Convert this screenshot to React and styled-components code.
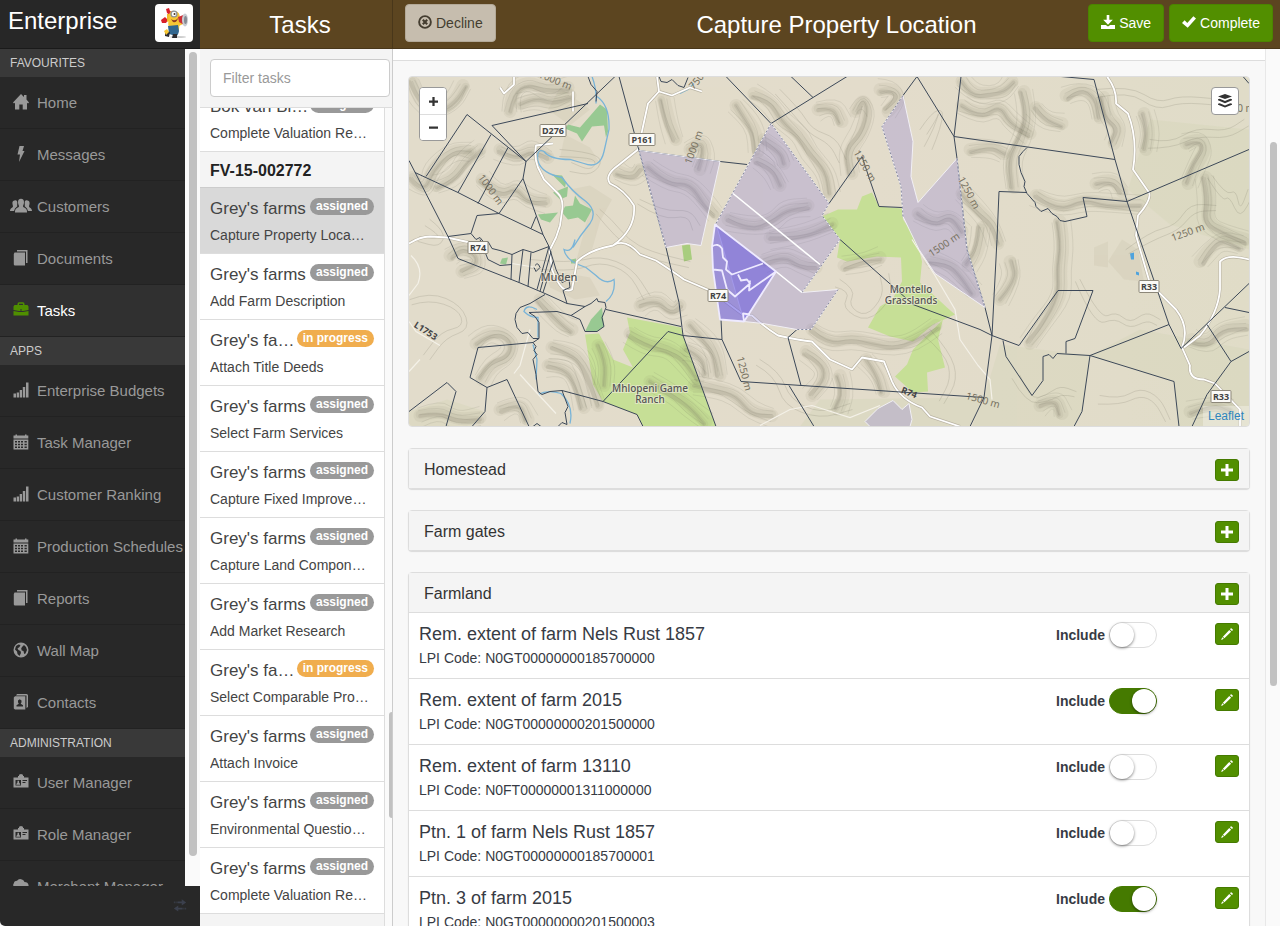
import React from "react";
import styled, { createGlobalStyle, css } from "styled-components";

const GlobalStyle = createGlobalStyle`
  *, *::before, *::after { box-sizing: border-box; }
  body {
    margin: 0;
    background: #f8f8f8;
    color: #333;
    font: 14px/20px "Helvetica Neue", "Liberation Sans", Arial, sans-serif;
  }
  h1, h2, h3, p, ul { margin: 0; padding: 0; font-weight: normal; }
  ul { list-style: none; }
  button, input { font: inherit; }
`;

/* ---------- shell ---------- */

const Shell = styled.div`
  display: grid;
  grid-template-columns: 200px 193px minmax(0, 1fr);
  height: 100vh;
  overflow: hidden;
`;

const Column = styled.div`
  display: flex;
  flex-direction: column;
  min-width: 0;
  min-height: 0;
`;

const Bar = styled.header`
  flex: 0 0 49px;
  display: flex;
  align-items: center;
  background: #5c4520;
  border-bottom: 1px solid #49371a;
  color: #fff;
`;

const BrandBar = styled(Bar)`
  justify-content: space-between;
  padding: 0 7px 2px 8px;
  background: #272727;
  border-color: #1a1a1a;
`;

const Title = styled.h1`
  padding-top: 2px;
  font-size: 24px;
  line-height: 32px;
`;

const Brand = styled(Title)`
  padding: 0 0 4px;
`;

const Avatar = styled.svg`
  width: 38px;
  height: 38px;
  border-radius: 4px;
  background: #fff;
`;

const Scroller = styled.div`
  flex: 1;
  display: flex;
  min-height: 0;
  overflow: hidden;
`;

const Track = styled.div`
  flex: 0 0 15px;
  padding: 0 3px 0 4px;
  background: #fafafa;
  border-left: ${(p) => (p.$line ? "1px solid #e8e8e8" : "0")};
`;

const Thumb = styled.div`
  height: ${(p) => p.$size};
  margin-top: ${(p) => p.$top}px;
  border-radius: 4px;
  background: #c1c1c1;
`;

/* ---------- sidebar ---------- */

const SideNav = styled.nav`
  flex: 1;
  min-width: 0;
  overflow: hidden;
  background: #282828;
`;

const SideHeading = styled.h2`
  height: 28px;
  padding-left: 10px;
  background: #393939;
  color: #ccc;
  font-size: 12px;
  line-height: 28px;
`;

const SideLink = styled.a`
  display: flex;
  align-items: center;
  gap: 8px;
  height: 52px;
  padding-left: 13px;
  border-bottom: 1px solid #222;
  background: ${(p) => (p.$active ? "#303030" : "transparent")};
  color: ${(p) => (p.$active ? "#fff" : "#999")};
  font-size: 15px;
  text-decoration: none;
  white-space: nowrap;

  svg {
    flex: none;
    margin-bottom: 2px;
    overflow: visible;
    color: ${(p) => (p.$active ? "#4f8f00" : "#999")};
  }
`;

const SideFoot = styled.footer`
  flex: 0 0 40px;
  display: flex;
  align-items: center;
  justify-content: flex-end;
  padding: 0 13px 2px 0;
  background: #282828;
  border-bottom-left-radius: 5px;
  color: #3b404d;

  svg { width: 14px; height: 14px; }
`;

/* ---------- task list ---------- */

const TaskBar = styled(Bar)`
  justify-content: center;
  padding-left: 8px;
  border-right: 1px solid #49371a;
`;

const FilterBox = styled.div`
  flex: 0 0 59px;
  padding: 10px 2px 10px 10px;
  background: #f4f4f4;
  border-bottom: 1px solid #ddd;
  border-right: 1px solid #ccc;
`;

const FilterInput = styled.input`
  width: 100%;
  height: 38px;
  padding: 0 12px;
  border: 1px solid #ccc;
  border-radius: 4px;
  background: #fff;
  &::placeholder { color: #999; }
`;

const TaskScroller = styled(Scroller)`
  background: #f4f4f4;
  border-right: 1px solid #ccc;
`;

const TaskList = styled.ul`
  flex: 1;
  min-width: 0;
  margin-top: -22px;
`;

const TaskTrack = styled(Track)`
  flex-basis: 8px;
  padding: 0 0 0 4px;
  border-left: 1px solid #ddd;
`;

const TaskThumb = styled(Thumb)`
  border-radius: 4px 0 0 4px;
`;

const GroupRow = styled.li`
  height: 36px;
  padding-left: 10px;
  border-bottom: 1px solid #ccc;
  color: #222;
  font-size: 16px;
  font-weight: bold;
  line-height: 38px;
`;

const TaskRow = styled.li`
  height: 66px;
  padding: 9px 10px;
  border-bottom: 1px solid #ddd;
  background: ${(p) => (p.$active ? "#d9d9d9" : "#fff")};
  color: #444;
`;

const TaskTop = styled.div`
  display: flex;
  justify-content: space-between;
  margin-bottom: 4px;
`;

const clipped = css`
  overflow: hidden;
  text-overflow: ellipsis;
  white-space: nowrap;
`;

const TaskName = styled.h3`
  min-width: 0;
  font-size: 17px;
  line-height: 24px;
  ${clipped}
`;

const TaskStep = styled.p`
  padding-right: 3px;
  ${clipped}
`;

const Badge = styled.span`
  flex: none;
  height: 17px;
  margin-top: 1px;
  padding: 0 6px;
  border-radius: 9px;
  background: ${(p) => (p.$busy ? "#f0ad4e" : "#999")};
  color: #fff;
  font-size: 12px;
  font-weight: bold;
  line-height: 16px;
`;

/* ---------- detail ---------- */

const DetailBar = styled(Bar)`
  display: grid;
  grid-template-columns: 1fr auto 1fr;
  padding: 0 7px;
`;

const Actions = styled.div`
  display: flex;
  justify-content: ${(p) => (p.$end ? "flex-end" : "flex-start")};
  gap: 5px;
  padding: 0 0 3px ${(p) => (p.$end ? 0 : 5)}px;
`;

const Button = styled.button`
  display: flex;
  align-items: center;
  gap: 4px;
  height: 38px;
  padding: 0 12px;
  border: 1px solid ${(p) => (p.$muted ? "#b3a998" : "#4b8400")};
  border-radius: 4px;
  background: ${(p) => (p.$muted ? "#c6bdae" : "#528f00")};
  color: ${(p) => (p.$muted ? "#443d30" : "#fff")};

  svg { width: 14px; height: 14px; margin-bottom: 2px; }
`;

const Detail = styled.main`
  flex: 1;
  min-width: 0;
  overflow: hidden;
`;

const CardEnd = styled.div`
  height: 12px;
  margin-bottom: 15px;
  background: #fff;
  border-bottom: 1px solid #ddd;
`;

const Stack = styled.div`
  display: flex;
  flex-direction: column;
  gap: 21px;
  padding: 0 15px;
`;

const Panel = styled.section`
  border: 1px solid #ddd;
  border-radius: 4px;
  background: #fff;
  box-shadow: 0 1px 1px rgba(0, 0, 0, 0.12);
`;

const PanelHead = styled.div`
  display: flex;
  align-items: center;
  justify-content: space-between;
  height: 39px;
  padding: 3px 10px 0 15px;
  background: #f4f4f4;
`;

const PanelTitle = styled.h2`
  font-size: 16px;
`;

const IconButton = styled.button`
  display: flex;
  align-items: center;
  justify-content: center;
  width: 24px;
  height: 22px;
  padding: 0;
  border: 1px solid #457a00;
  border-radius: 3px;
  background: #528f00;
  color: #fff;

  svg { width: 12px; height: 12px; }
`;

const RowButton = styled(IconButton)`
  margin-top: 1px;
`;

const ParcelRow = styled.li`
  display: grid;
  grid-template-columns: minmax(0, 1fr) 159px 24px;
  align-items: start;
  height: 66px;
  padding: 9px 10px;
  border-top: 1px solid #ddd;
  color: #373b44;
`;

const ParcelName = styled.h3`
  margin-bottom: 2px;
  font-size: 18px;
  line-height: 24px;
`;

const IncludeLabel = styled.label`
  display: flex;
  align-items: center;
  gap: 4px;
  font-weight: bold;
`;

const Switch = styled.input`
  appearance: none;
  display: flex;
  width: 48px;
  height: 26px;
  margin: 0;
  border: 1px solid #ddd;
  border-radius: 13px;
  background: #fff;

  &::before {
    content: "";
    width: 24px;
    height: 24px;
    border-radius: 50%;
    background: #fff;
    box-shadow: 0 1px 3px rgba(0, 0, 0, 0.5);
  }

  &:checked {
    justify-content: flex-end;
    border-color: #457a00;
    background: #457a00;
  }
`;

/* ---------- map ---------- */

const MapBox = styled.div`
  position: relative;
  height: 351px;
  overflow: hidden;
  border: 1px solid #ddd;
  border-radius: 4px;
`;

const MapArt = styled.svg`
  display: block;
  width: 100%;
  height: 100%;
`;

const ZoomBox = styled.div`
  position: absolute;
  top: 10px;
  left: 10px;
  border: 1px solid #999;
  border-radius: 4px;
  background: #fff;
  overflow: hidden;
`;

const ZoomButton = styled.button`
  display: flex;
  align-items: center;
  justify-content: center;
  width: 26px;
  height: 26px;
  padding: 0;
  border: 0;
  background: #fff;
  color: #333;
  & + & { border-top: 1px solid #ddd; }
  svg { width: 9px; height: 9px; }
`;

const LayersButton = styled.button`
  position: absolute;
  top: 10px;
  right: 10px;
  display: flex;
  align-items: center;
  justify-content: center;
  width: 28px;
  height: 28px;
  padding: 0;
  border: 1px solid #999;
  border-radius: 4px;
  background: #fff;
  color: #333;
  svg { width: 14px; height: 14px; }
`;

const Credit = styled.a`
  position: absolute;
  right: 0;
  bottom: 0;
  padding: 0 5px;
  background: rgba(255, 255, 255, 0.3);
  color: #2f86bd;
  font-size: 12px;
  text-decoration: none;
`;

const Place = styled.text`
  fill: #555;
  stroke: #f2eee0;
  stroke-width: 2px;
  stroke-opacity: 0.6;
  paint-order: stroke;
  font: 500 ${(p) => p.$size || 10}px "Noto Sans", "Open Sans", sans-serif;
  text-anchor: middle;
`;

const Height = styled.text`
  fill: #77715f;
  font: 10px "Noto Sans", sans-serif;
  text-anchor: middle;
`;

const ShieldText = styled.text`
  fill: #444;
  font: bold 9px "Noto Sans", "Open Sans", sans-serif;
  text-anchor: middle;
`;

const ridges = [
  [[412, 82], [420, 104], [438, 112], [455, 102], [463, 86]],
  [[510, 112], [511, 92], [528, 82], [546, 90], [568, 88]],
  [[520, 104], [535, 98], [552, 104], [570, 96]],
  [[412, 178], [424, 194], [432, 170], [452, 150], [470, 152]],
  [[436, 186], [452, 180], [465, 160], [480, 150]],
  [[482, 180], [500, 196], [516, 188], [528, 200], [546, 202]],
  [[500, 150], [516, 160], [532, 148], [548, 158]],
  [[476, 344], [486, 334], [502, 334], [512, 344], [508, 358], [492, 366], [482, 380]],
  [[450, 256], [460, 248], [476, 254], [478, 266], [462, 272]],
  [[552, 348], [572, 352], [584, 364], [592, 386], [598, 406]],
  [[548, 366], [566, 368], [578, 384], [584, 408]],
  [[540, 300], [560, 324], [572, 330]],
  [[640, 306], [656, 298], [672, 312], [680, 306]],
  [[630, 334], [646, 346], [668, 348], [684, 360], [698, 380]],
  [[598, 346], [606, 362], [604, 386]],
  [[650, 382], [672, 392], [690, 408], [706, 422]],
  [[618, 172], [632, 178], [640, 170]],
  [[420, 416], [440, 410], [456, 420], [480, 418]],
  [[500, 410], [520, 402], [528, 420]],
  [[664, 100], [668, 120], [676, 140]],
  [[690, 150], [702, 140], [706, 154], [700, 170]],
  [[736, 106], [746, 118], [756, 132], [758, 152]],
  [[754, 94], [770, 100], [782, 122], [800, 134], [810, 152], [826, 172], [830, 194]],
  [[856, 112], [862, 98], [868, 110], [862, 134], [848, 152], [852, 174]],
  [[818, 110], [834, 106], [842, 122]],
  [[880, 90], [892, 88], [900, 98], [888, 112]],
  [[764, 140], [780, 152], [784, 164]],
  [[758, 160], [772, 168], [780, 186]],
  [[728, 220], [750, 228], [772, 222], [786, 210], [808, 206]],
  [[648, 168], [668, 182], [690, 184], [706, 204], [716, 214]],
  [[770, 238], [800, 236], [832, 224]],
  [[764, 262], [784, 256], [800, 264], [816, 268]],
  [[812, 330], [828, 344], [852, 338], [872, 344], [894, 346], [914, 342], [936, 326]],
  [[844, 266], [862, 262], [880, 258]],
  [[690, 326], [704, 338], [716, 352], [720, 376]],
  [[686, 350], [704, 356], [708, 374]],
  [[694, 386], [716, 388], [736, 396], [752, 412], [772, 416]],
  [[806, 352], [820, 362], [826, 378], [812, 396]],
  [[840, 376], [846, 392], [838, 410]],
  [[866, 360], [878, 374], [884, 392]],
  [[918, 214], [934, 224], [950, 216], [962, 232]],
  [[930, 260], [948, 264], [960, 276], [974, 292]],
  [[962, 82], [972, 94], [990, 94], [1004, 92], [1012, 82]],
  [[962, 106], [980, 116], [1000, 106], [1010, 122], [1030, 134]],
  [[1024, 92], [1030, 116], [1022, 140], [1010, 160], [1014, 188]],
  [[970, 150], [990, 146], [1004, 154]],
  [[962, 194], [978, 210], [992, 224], [998, 244]],
  [[1036, 108], [1044, 120], [1062, 124]],
  [[1066, 96], [1080, 88], [1096, 98], [1100, 118]],
  [[1104, 98], [1106, 116], [1120, 128], [1114, 144]],
  [[1036, 196], [1058, 210], [1084, 200], [1106, 204], [1140, 206]],
  [[1096, 184], [1112, 178], [1122, 192]],
  [[1186, 144], [1200, 138], [1206, 150], [1196, 166], [1188, 184]],
  [[1206, 178], [1210, 200], [1206, 222], [1224, 234], [1246, 240]],
  [[1144, 114], [1150, 130], [1146, 150]],
  [[1060, 222], [1064, 244], [1060, 270], [1062, 296], [1042, 326], [1030, 344]],
  [[1000, 300], [1014, 280], [1010, 262]],
  [[982, 228], [980, 250], [968, 266]],
  [[1200, 262], [1208, 250], [1222, 240], [1240, 246]],
  [[1192, 340], [1206, 346], [1222, 330], [1246, 326]],
  [[1190, 412], [1212, 404], [1230, 410]],
  [[1040, 406], [1056, 398], [1062, 414]],
];

const contourLoops = [
  [[430, 220], [446, 232], [440, 248], [418, 242]],
  [[560, 150], [586, 152], [604, 160], [592, 176], [570, 172]],
  [[840, 280], [856, 290], [848, 306], [866, 318], [884, 296], [880, 276]],
  [[1150, 140], [1170, 144], [1196, 128], [1226, 132], [1244, 120]],
  [[1080, 280], [1100, 320], [1116, 312], [1130, 324], [1146, 312], [1160, 320]],
  [[1126, 250], [1150, 232], [1176, 226], [1190, 204], [1216, 206]],
  [[1096, 90], [1130, 86], [1158, 104], [1180, 96], [1222, 100]],
  [[1020, 376], [1030, 400], [1046, 396], [1060, 386], [1076, 392]],
  [[1100, 396], [1120, 400], [1140, 388], [1160, 398], [1170, 420]],
  [[1212, 176], [1226, 196], [1236, 190], [1240, 212], [1248, 190]],
  [[410, 300], [430, 292], [462, 306], [470, 330], [446, 338], [430, 360]],
  [[530, 260], [570, 264], [600, 256], [632, 268], [650, 296]],
  [[600, 210], [612, 220], [628, 240], [650, 252], [690, 262]],
  [[640, 200], [664, 212], [690, 210], [700, 226]],
  [[760, 360], [780, 372], [790, 400], [820, 414], [850, 404]],
  [[930, 330], [950, 352], [958, 380], [944, 404]],
  [[780, 90], [800, 110], [812, 130], [836, 138], [846, 160]],
  [[920, 130], [932, 112], [944, 110], [940, 130], [932, 150]],
];

function curve(points) {
  let d = `M${points[0][0]} ${points[0][1]}`;
  for (let i = 1; i < points.length - 1; i += 1) {
    const [x, y] = points[i];
    const [nx, ny] = points[i + 1];
    d += `Q${x} ${y} ${(x + nx) / 2} ${(y + ny) / 2}`;
  }
  const last = points[points.length - 1];
  return `${d}L${last[0]} ${last[1]}`;
}

/* Shifts a line sideways; the small wave keeps neighbouring contours from running parallel. */
function offset(points, distance) {
  return points.map(([x, y], i) => {
    const a = points[Math.max(0, i - 1)];
    const b = points[Math.min(points.length - 1, i + 1)];
    const dx = b[0] - a[0];
    const dy = b[1] - a[1];
    const len = Math.hypot(dx, dy) || 1;
    const shift = distance + Math.sin(x * 3 + distance) * 2;
    return [x - (dy / len) * shift, y + (dx / len) * shift];
  });
}

const parcelLines = `
M409 161L448 237L458 259L519 283L545 294L567 304L585 307
M415 173L458 193L499 214L543 235L549 247
M426 177L467 115L526 162 M458 193L491 135 M478 204L508 148
M499 214L523 179L526 162L492 126L588 104 M526 162L615 77
M523 179L543 235 M531 229L536 217 M499 214L477 216L471 234L448 237
M471 234L476 240L480 238L484 243L488 242L492 249L500 251L512 255L523 250L533 253L549 247
M480 240L484 250L488 260L500 266L512 265 M512 255L511 280 M523 250L519 283 M531 253L528 287
M549 247L537 290 M551 252L540 292 M553 262L543 293 M549 247L556 270L562 283L569 280L570 288L563 291L567 304
M535 266Q538 262 540 268L536 272L534 268
M545 295L530 304L520 308L516 314L515 320L517 328L522 334L528 333L533 339L539 339L539 323L535 317L529 313L557 312L571 316L580 320L585 332L597 332L604 327L602 318L606 308L605 303L598 302L597 299L591 304L585 307L571 316
M606 310L681 327 M539 339L533 343L478 348L470 378L487 388L485 412L472 427 M487 388L507 380L529 427
M533 343L536 347L534 351L537 355L533 360L536 375L538 392L542 395L550 392L562 391L603 402L637 415L643 427
M562 391L568 407L565 413L567 425L562 423L558 427 M533 427L537 424L541 427
M409 412L447 383L456 392L446 427 M603 402L668 332L683 336
M619 77L639 151L666 248L679 303L682 328L683 336L722 340L721 320 M683 336L716 427
M588 77L591 85L597 92L596 102 M659 77L661 82L667 83L672 80L678 86L684 88L688 78
M726 77L771 124L813 98L847 77 M791 77L813 98 M639 151L720 162L747 165
M829 204L862 157L870 181L879 207L902 208 M903 96L917 77L954 137L957 159L967 250L985 308L992 336
M961 77L954 137L1115 160 M840 240L893 287L913 305L980 330L992 336L1019 346L1058 291L1093 291L1075 339L1066 342L1066 354
M722 340L741 382L984 398 M797 330L788 338L801 386 M789 386L814 427
M1061 77L1094 80L1115 160L1127 202L1169 325L1181 349L1249 284 M1127 202L1249 150
M1127 202L1083 198L1087 217L1065 222L1060 221L1057 217L1052 214L1048 209L1041 212L1036 207L1035 203L1027 194L1024 187L1025 182L1021 173L1019 165L1019 157L1023 152L1027 148
M1027 193L999 192L997 240L992 336L984 398L970 427
M1003 341L1006 357L1032 396L1043 381L1043 357L1049 355L1053 359L1057 354L1090 356L1169 325
M1090 356L1174 382L1179 427 M1090 356L1082 412L1074 427
M1225 308L1249 313 M1207 325L1231 362L1249 352 M1231 362L1207 395L1192 427 M1243 77L1249 84
`;

const roads = `
M409 244Q420 237 430 237L447 238L470 243
M573 92V112 M553 144L536 146Q534 158 538 168L544 180L558 194Q564 200 562 212L560 226L556 238L550 250
M549 247L552 270Q562 296 572 290L577 262Q590 250 613 246Q625 238 640 255L656 261Q676 274 684 280L712 292L744 316L752 316Q765 328 778 336Q800 341 812 342L830 360L852 370L862 358L884 362L892 382Q900 400 922 408L930 417L960 427
M613 246Q636 230 634 206Q624 190 610 184Q604 176 618 166L638 150L648 104L659 92L657 77 M659 92L672 96L690 88L702 92
M1107 77Q1117 90 1116 104L1128 114Q1138 140 1133 170L1149 193Q1152 200 1138 216L1136 236L1150 284L1162 296L1176 310Q1190 328 1182 348L1190 366Q1188 380 1204 380L1215 384L1240 410V427
M1184 348L1200 336Q1218 314 1220 290V262Q1228 254 1249 260
M500 88L504 94L514 85V77
`;

const minorRoads = `
M409 322L416 332L440 346 M409 372L420 360 M512 264L536 268 M520 375L530 386L556 414
M912 240L935 276L955 310L960 340L978 366L990 380L992 400 M760 426L790 410L812 406L850 418L880 406
M411 256Q424 268 418 284L409 296 M530 330L520 366L514 374
`;

const rivers = `
M592 77Q597 90 596 104 M597 97Q610 106 609 130L604 152Q600 170 584 164L570 160Q550 160 544 152Q536 148 538 162Q542 174 562 178Q572 192 586 202Q598 212 590 224Q580 236 573 248
M575 240Q572 254 564 250Q566 262 586 268L596 276Q606 286 614 280Q616 294 606 302
M537 310Q526 304 524 312Q530 318 538 318L538 338 M538 395Q548 390 561 394Q574 406 570 424
M533 345L537 360L536 380 M680 94L688 90L694 84
`;

const greens = [
  "862,197 872,193 879,207 902,209 903,220 910,230 919,250 922,262 920,283 947,308 955,315 933,325 913,342 890,337 868,328 880,307 893,299 902,282 901,258 877,257 847,262 837,258 840,240 822,217 838,210 857,210",
  "943,320 938,340 945,368 927,373 928,392 913,393 895,377 907,365 913,350",
  "627,318 681,328 683,336 716,427 643,427 637,415 603,402 593,385 585,335 599,334 613,360 633,368 623,350 630,333",
];

const woods = [
  "600,105 607,110 608,132 606,138 604,126 592,127 582,142 577,134 565,129 568,125 580,128",
  "552,175 562,176 566,183 565,188",
  "553,193 568,187 567,197 560,200",
  "565,207 573,206 575,196 580,204 592,210 585,223 578,218 568,220 562,213",
  "538,215 558,213 550,223 541,220",
  "602,308 604,327 597,332 585,332 591,320",
  "502,259 508,258 506,265 500,264",
  "571,260 576,259 576,264 571,264",
];

const shields = [
  ["D276", 553, 131],
  ["P161", 642, 140],
  ["R74", 478, 248],
  ["R74", 718, 296],
  ["R33", 1149, 287],
  ["R33", 1221, 397],
];

const heights = [
  ["1000 m", 488, 192, 54],
  ["1000 m", 554, 84, 22],
  ["1000 m", 697, 149, -70],
  ["750", 699, 84, -50],
  ["1250 m", 862, 168, 60],
  ["1250 m", 966, 195, 62],
  ["1500 m", 946, 248, -34],
  ["1250 m", 1189, 236, -20],
  ["1250 m", 741, 375, 76],
  ["1500 m", 982, 404, 16],
  ["0 m", 1246, 112, 0],
];

function FarmMap() {
  return (
    <MapArt viewBox="409 77 840 350" preserveAspectRatio="xMidYMid slice" role="img" aria-label="Property map">
      <defs>
        <linearGradient id="land" x1="0" x2="1">
          <stop offset="0" stopColor="#e2dccb" />
          <stop offset=".55" stopColor="#e3dccb" />
          <stop offset="1" stopColor="#e0dcc8" />
        </linearGradient>
      </defs>
      <rect x="409" y="77" width="840" height="350" fill="url(#land)" />
      <g fill="#d6cfba" opacity=".55">
        <path d="M570 190L590 186L612 200L600 222L592 250L576 262L590 210Z" />
        <path d="M545 270L590 278L600 296L575 300L550 288Z" />
        <path d="M565 135L590 148L600 164L560 158Z" />
        <path d="M560 88L590 110L570 126L548 110Z" />
        <path d="M1094 248L1108 242V268L1094 266Z M1122 240L1138 250L1144 282L1124 280L1108 262Z" />
      </g>
      <g fill="#cfd3b4" opacity=".3">
        <path d="M1000 345L1090 356L1082 412L1074 427H972L984 398Z" />
        <path d="M1090 356L1174 382L1179 427H1249V350L1140 330Z" />
        <path d="M409 412L447 400L485 412L472 427H409Z M820 400L984 398L970 427H800Z" />
        <path d="M1150 120L1249 130V250L1170 225L1128 190Z" />
      </g>
      {greens.map((points) => (
        <polygon key={points} points={points} fill="#c6df96" />
      ))}
      {woods.map((points) => (
        <polygon key={points} points={points} fill="#98c992" />
      ))}
      <polygon points="682,246 690,245 692,260 684,262" fill="#a8cd7e" />

      <g fill="none" stroke="#6f6d5c" strokeLinejoin="round" strokeLinecap="round">
        {ridges.map((points) => (
          <g key={points.join()}>
            <path d={curve(points)} strokeWidth="13" opacity=".07" />
            <path d={curve(offset(points, 1))} strokeWidth="8" opacity=".08" />
            <path d={curve(offset(points, 2))} strokeWidth="4" opacity=".14" />
            {[-9, -4, 1, 5, 10].map((d) => (
              <path key={d} d={curve(offset(points, d))} strokeWidth=".6" opacity=".22" />
            ))}
          </g>
        ))}
        {contourLoops.map((points) => (
          <g key={points.join()} opacity=".3" strokeWidth=".6">
            <path d={curve(points)} />
            <path d={curve(offset(points, 7))} />
          </g>
        ))}
      </g>

      <path d={rivers} fill="none" stroke="#79b4d8" strokeWidth="1.3" />
      <path d="M1130 254L1134 253V260H1131Z M1136 272L1139 273V276L1136 275Z" fill="#4fa3dd" />
      <path d={minorRoads} fill="none" stroke="#f4f1e8" strokeWidth="1.2" />
      <path d={roads} fill="none" stroke="#b9b3a3" strokeWidth="3" strokeLinejoin="round" />
      <path d={roads} fill="none" stroke="#fff" strokeWidth="1.8" strokeLinejoin="round" />
      <path d={parcelLines} fill="none" stroke="#3c4858" strokeWidth="1" strokeLinejoin="round" />

      <g fill="#8478d8" fillOpacity=".27" stroke="#f1eff5" strokeWidth="1">
        <polygon points="639,151 720,162 701,246 687,244 666,248" />
        <polygon points="771,124 829,204 822,216 840,240 802,293 838,290 811,330 797,330 763,324 744,322 716,224" />
        <polygon points="903,96 913,142 911,177 918,203 957,159 967,250 985,308 935,274 919,250 903,217 901,187 882,127" />
        <polygon points="893,401 902,410 909,404 912,420 910,427 870,427 865,422 878,409" />
      </g>
      <path d="M639 151L666 248 M716 224L771 124L829 204L822 216L840 240L802 293 M838 290L811 330H797 M957 159L967 250L985 308 M903 217L901 187L882 127L903 96" fill="none" stroke="#6c708c" strokeDasharray="2 2" strokeWidth=".8" />
      <path d="M733 194L820 265 M776 272L802 293" fill="none" stroke="#fff" strokeWidth="1.6" />
      <polygon points="715,225 776,272 744,322 720,320 713,270 712,247" fill="#6555e0" fillOpacity=".56" />
      <path
        d="M715 225L776 272L744 322L720 320L713 270L712 247Z M712 247Q718 243 722 249L723 258L727 262L726 270L732 275L763 264 M713 270L722 271L727 290L735 297L750 284L747 280L741 281L738 275 M750 281L749 291L776 272 M744 322L743 314L750 315"
        fill="none"
        stroke="#eeeaff"
        strokeWidth="1.8"
        strokeLinejoin="round"
      />

      {shields.map(([label, x, y]) => (
        <g key={label + x}>
          <rect x={x - label.length * 3 - 1} y={y - 6} width={label.length * 6 + 2} height="12" rx="1" fill="#fbfaf6" stroke="#8c8779" />
          <ShieldText x={x} y={y + 3}>{label}</ShieldText>
        </g>
      ))}
      {heights.map(([label, x, y, angle]) => (
        <Height key={label + x} transform={`translate(${x} ${y}) rotate(${angle})`}>{label}</Height>
      ))}
      <ShieldText transform="translate(424 334) rotate(33)">L1753</ShieldText>
      <ShieldText transform="translate(908 396) rotate(22)">R74</ShieldText>
      <Place x="559" y="281" $size={11}>Muden</Place>
      <Place x="650" y="392">Mhlopeni Game</Place>
      <Place x="650" y="403">Ranch</Place>
      <Place x="911" y="293">Montello</Place>
      <Place x="911" y="304">Grasslands</Place>
    </MapArt>
  );
}

/* ---------- icons ---------- */

const shapes = {
  home: <path d="M8 0L11 3V1H13.500V5.500L16 8.500L15 9.500L14 8.700V15.500H9.700V10.500H6.300V15.500H2V8.700L1 9.500L0 8.500Z" />,
  flash: <path d="M6.500 0H11L9.500 5H11.500L6 16L7 8.500H4.500Z" />,
  group: (
    <>
      <path d="M8 .8C10.200 .8 11 2.300 11 4.300S10 7.500 10 8.200C10 9.600 14 9.800 14 13.500V14.500H2V13.500C2 9.800 6 9.600 6 8.200C6 7.500 5 6.300 5 4.300S5.800 .8 8 .8Z" />
      <path d="M1.500 2.500C3 1.800 4.300 2.600 4.300 4.500S4 7 4.300 8.300L2 10.500L1 13H-3C-3 10 0 10 0 8.300C0 7.600-.6 6.600-.6 5C-.6 3.600 .2 2.800 1.500 2.500ZM14.500 2.500C13 1.800 11.700 2.600 11.700 4.500S12 7 11.700 8.300L14 10.500L15 13H19C19 10 16 10 16 8.300C16 7.600 16.600 6.600 16.600 5C16.600 3.600 15.800 2.800 14.500 2.500Z" />
    </>
  ),
  docs: <path d="M4 0H14.500V13H13V1.500H4ZM1.500 2.500H12V15.500H1.500L.8 14.500V4Z" />,
  briefcase: <path fillRule="evenodd" d="M4.500 3V2Q4.500 .3 6 .3H10Q11.500 .3 11.500 2V3H14.500L15.500 4.500V8L10 9H6L.5 8V4.500L1.500 3ZM6 3H10V1.800H6ZM7 7.500V8.500H9V7.500ZM.5 9L6 10H10L15.500 9V13.500H.5Z" />,
  bars: <path d="M.5 11.500H3V15.500H.5ZM3.700 10.500H6V15.500H3.700ZM6.700 8H9V15.500H6.700ZM9.800 5H12.200V15.500H9.800ZM13 .5H15.500V15.500H13Z" />,
  calendar: (
    <path
      fillRule="evenodd"
      d="M.5 1.500H2.500V.5H4V1.500H12V.5H13.500V1.500H15.300V4.500H.5ZM.5 5.500H15.300V15.500H.5ZM2 7V8.500H4V7ZM5 7V8.500H7V7ZM8 7V8.500H10V7ZM11.500 7V8.500H13.800V7ZM2 9.700V11.200H4V9.700ZM5 9.700V11.200H7V9.700ZM8 9.700V11.200H10V9.700ZM11.500 9.700V11.200H13.800V9.700ZM2 12.500V14H4V12.500ZM5 12.500V14H7V12.500ZM8 12.500V14H10V12.500ZM11.500 12.500V14H13.800V12.500Z"
    />
  ),
  globe: (
    <path
      fillRule="evenodd"
      d="M8 .5A7.500 7.500 0 1 1 8 15.500A7.500 7.500 0 1 1 8 .5ZM3 4L5.500 2.500L7.500 3L6.500 5L4.500 6.500L5.500 8L7.500 9L8 11L6.500 14L4.500 12L4 9.500L2 7.500ZM9 5L11 3L13 5L14 8L12.500 11.500L11.200 12L10.500 9L8.700 8.500L8.200 6.500Z"
    />
  ),
  contacts: <path fillRule="evenodd" d="M4 0H13.500Q15 0 15 1.500V13L13.500 14V1.500H3ZM.8 3.500L2 2.300H12.300V15.500H2L.8 14.500ZM5 6.500V8.300L5.800 9.800L3.500 11.300V12.500H10V11.300L7.700 9.800L8.500 8.300V6.500L6.700 5.200Z" />,
  badge: <path fillRule="evenodd" d="M6 2V.8L8 0L10 .8V2H11V3.500H15.500V13.500H.5V3.500H5V2ZM2.500 6V11.500H8V6ZM9.500 6V7H14V6ZM9.500 8V9H12.500V8ZM4.500 6.800H6V8.600L7.200 10V10.800H3.300V10L4.500 8.600Z" />,
  cloud: <path d="M3 10A3 3 0 0 1 1 5Q1 3 4 2.800Q6 0 9 1.500Q11 2 11.500 4Q15 4 15.500 7Q16 9.500 13 10Z" />,
  swap: <path d="M1 4H2V6H1ZM3 4H4V6H3ZM5 4H10V1.500L15 5L10 8.500V6H5ZM15 11H14V13H15ZM13 11H12V13H13ZM11 11H6V8.500L1 12L6 15.500V13H11Z" />,
  decline: (
    <g fill="none" stroke="currentColor" strokeWidth="2.200">
      <circle cx="8" cy="8" r="6.700" />
      <path d="M5.500 5.500L10.500 10.500M10.500 5.500L5.500 10.500" strokeWidth="2.500" />
    </g>
  ),
  save: <path d="M6.500 0H9.500V5.500H13.500L8 11L2.500 5.500H6.500ZM0 11.500H5.500L8 13L10.500 11.500H16V16H0Z" />,
  check: <path d="M0 9L3 6L6 9L13 1.500L16 4L6.500 14.500Z" />,
  plus: <path d="M6 0H10V6H16V10H10V16H6V10H0V6H6Z" />,
  minus: <path d="M0 6H16V10H0Z" />,
  pencil: <path d="M12 1.500L12.800 .5Q13.500-.1 14.200 .6L15.400 1.800Q16.100 2.500 15.500 3.200L14.500 4ZM11 2.500L13.500 5L4.500 13.500L2.500 11.500ZM1.800 12.200L3.800 14.200L0 16Z" />,
  layers: <path d="M8 0L16 2.800L8 5.600L0 2.800ZM0 6L2 5.500L8 8L14 5.500L16 6V7.200L8 10.500L0 7.200ZM0 11L2 10.500L8 13L14 10.500L16 11V12.200L8 15.500L0 12.200Z" />,
};

function Icon({ name }) {
  return (
    <svg viewBox="0 0 16 16" width="16" height="16" fill="currentColor" aria-hidden="true">
      {shapes[name]}
    </svg>
  );
}

function Mascot() {
  return (
    <Avatar viewBox="0 0 38 38" role="img" aria-label="Profile">
      <ellipse cx="23" cy="33" rx="8" ry="1" fill="#ccc" />
      <path d="M11 5L14 4L15 7L17 8L15 11L12 9Z" fill="#d8202b" />
      <path d="M6 16L10 13L13 16L11 19L7 19Z" fill="#d8202b" />
      <path d="M12 10L15 10L16 16L12 18Z" fill="#f0b92e" />
      <path d="M14 11Q15 6 20 7Q25 8 25 14L24 26Q20 30 15 27Q12 20 14 11Z" fill="#f6c634" />
      <circle cx="19" cy="10" r="3.600" fill="#8d9197" />
      <circle cx="19" cy="10" r="2.300" fill="#fff" />
      <circle cx="19.500" cy="10" r="1" fill="#4a3520" />
      <path d="M16 15Q20 18 23 14Q22 19 18 18Z" fill="#8d3a20" />
      <path d="M13 22L23 21L24 27Q23 32 21 32L14 30Z" fill="#31668f" />
      <path d="M10 27L15 28L14 33L10 32Z M18 30L22 30L22 34L17 34Z" fill="#2b2b30" />
      <path d="M9 27L12 25L14 28L11 31Z" fill="#f6c634" />
      <path d="M22 18L29 15L30 19L24 22Z" fill="#f6c634" />
      <path d="M23 13L31 10V22L24 18Z" fill="#cc3038" />
      <ellipse cx="30" cy="16" rx="3" ry="6.500" fill="#c8ccd2" />
      <ellipse cx="30.500" cy="16" rx="1.500" ry="4" fill="#858b93" />
    </Avatar>
  );
}

/* ---------- data ---------- */

const menu = [
  ["FAVOURITES", [["Home", "home"], ["Messages", "flash"], ["Customers", "group"], ["Documents", "docs"], ["Tasks", "briefcase"]]],
  [
    "APPS",
    [
      ["Enterprise Budgets", "bars"],
      ["Task Manager", "calendar"],
      ["Customer Ranking", "bars"],
      ["Production Schedules", "calendar"],
      ["Reports", "docs"],
      ["Wall Map", "globe"],
      ["Contacts", "contacts"],
    ],
  ],
  ["ADMINISTRATION", [["User Manager", "badge"], ["Role Manager", "badge"], ["Merchant Manager", "cloud"]]],
];

const steps = [
  ["Capture Property Loca…", "assigned"],
  ["Add Farm Description", "assigned"],
  ["Attach Title Deeds", "in progress"],
  ["Select Farm Services", "assigned"],
  ["Capture Fixed Improvements", "assigned"],
  ["Capture Land Components", "assigned"],
  ["Add Market Research", "assigned"],
  ["Select Comparable Properties", "in progress"],
  ["Attach Invoice", "assigned"],
  ["Environmental Questionnaire", "assigned"],
  ["Complete Valuation Report", "assigned"],
];

const parcels = [
  ["Rem. extent of farm Nels Rust 1857", "N0GT00000000185700000", false],
  ["Rem. extent of farm 2015", "N0GT00000000201500000", true],
  ["Rem. extent of farm 13110", "N0FT00000001311000000", false],
  ["Ptn. 1 of farm Nels Rust 1857", "N0GT00000000185700001", false],
  ["Ptn. 3 of farm 2015", "N0GT00000000201500003", true],
];

function Task({ name, step, status, active }) {
  return (
    <TaskRow $active={active}>
      <TaskTop>
        <TaskName>{name}</TaskName>
        <Badge $busy={status === "in progress"}>{status}</Badge>
      </TaskTop>
      <TaskStep>{step}</TaskStep>
    </TaskRow>
  );
}

function FeaturePanel({ title, children }) {
  return (
    <Panel>
      <PanelHead>
        <PanelTitle>{title}</PanelTitle>
        <IconButton type="button" aria-label={`Add ${title}`}>
          <Icon name="plus" />
        </IconButton>
      </PanelHead>
      {children}
    </Panel>
  );
}

export default function App() {
  return (
    <Shell>
      <GlobalStyle />
      <Column>
        <BrandBar>
          <Brand>Enterprise</Brand>
          <Mascot />
        </BrandBar>
        <Scroller>
          <SideNav>
            {menu.map(([heading, links]) => (
              <React.Fragment key={heading}>
                <SideHeading>{heading}</SideHeading>
                {links.map(([label, icon]) => (
                  <SideLink key={label} href="#" $active={label === "Tasks"}>
                    <Icon name={icon} />
                    {label}
                  </SideLink>
                ))}
              </React.Fragment>
            ))}
          </SideNav>
          <Track>
            <Thumb $top={3} $size="96%" />
          </Track>
        </Scroller>
        <SideFoot>
          <Icon name="swap" />
        </SideFoot>
      </Column>

      <Column>
        <TaskBar>
          <Title>Tasks</Title>
        </TaskBar>
        <FilterBox>
          <FilterInput type="text" placeholder="Filter tasks" aria-label="Filter tasks" />
        </FilterBox>
        <TaskScroller>
          <TaskList>
            <Task name="Bok van Blerk" step="Complete Valuation Report" status="assigned" />
            <GroupRow>FV-15-002772</GroupRow>
            {steps.map(([step, status], i) => (
              <Task key={step} name="Grey's farms" step={step} status={status} active={i === 0} />
            ))}
          </TaskList>
          <TaskTrack>
            <TaskThumb $top={604} $size="13%" />
          </TaskTrack>
        </TaskScroller>
      </Column>

      <Column>
        <DetailBar>
          <Actions>
            <Button type="button" $muted>
              <Icon name="decline" />
              Decline
            </Button>
          </Actions>
          <Title>Capture Property Location</Title>
          <Actions $end>
            <Button type="button">
              <Icon name="save" />
              Save
            </Button>
            <Button type="button">
              <Icon name="check" />
              Complete
            </Button>
          </Actions>
        </DetailBar>
        <Scroller>
          <Detail>
            <CardEnd />
            <Stack>
              <MapBox>
                <FarmMap />
                <ZoomBox>
                  <ZoomButton type="button" aria-label="Zoom in">
                    <Icon name="plus" />
                  </ZoomButton>
                  <ZoomButton type="button" aria-label="Zoom out">
                    <Icon name="minus" />
                  </ZoomButton>
                </ZoomBox>
                <LayersButton type="button" aria-label="Layers">
                  <Icon name="layers" />
                </LayersButton>
                <Credit href="#">Leaflet</Credit>
              </MapBox>
              <FeaturePanel title="Homestead" />
              <FeaturePanel title="Farm gates" />
              <FeaturePanel title="Farmland">
                <ul>
                  {parcels.map(([name, code, included]) => (
                    <ParcelRow key={name}>
                      <div>
                        <ParcelName>{name}</ParcelName>
                        <p>LPI Code: {code}</p>
                      </div>
                      <IncludeLabel>
                        Include
                        <Switch type="checkbox" defaultChecked={included} />
                      </IncludeLabel>
                      <RowButton type="button" aria-label={`Edit ${name}`}>
                        <Icon name="pencil" />
                      </RowButton>
                    </ParcelRow>
                  ))}
                </ul>
              </FeaturePanel>
            </Stack>
          </Detail>
          <Track $line>
            <Thumb $top={93} $size="62%" />
          </Track>
        </Scroller>
      </Column>
    </Shell>
  );
}
